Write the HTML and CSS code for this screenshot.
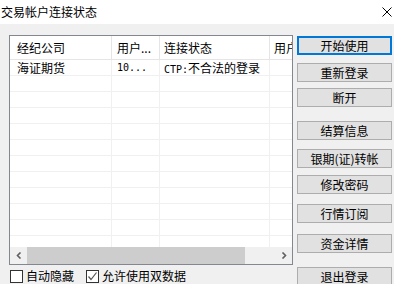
FILE: index.html
```html
<!DOCTYPE html>
<html lang="zh-CN">

<head>
    <meta charset="UTF-8">
    <title>交易帐户连接状态</title>
    <link rel="stylesheet" href="styles.css">
</head>

<body>
    <div class="dialog">
        <div class="titlebar">
            <span class="title">交易帐户连接状态</span>
            <svg class="close" width="10" height="10" viewBox="0 0 10 10">
                <path d="M0.5 0.5 L9.5 9.5 M9.5 0.5 L0.5 9.5" stroke="#000" stroke-width="1" fill="none"/>
            </svg>
        </div>

        <div class="content">
            <div class="left">
                <div class="listview">
                    <div class="list-header">
                        <div class="col c1">经纪公司</div>
                        <div class="col c2">用户...</div>
                        <div class="col c3">连接状态</div>
                        <div class="col c4">用户</div>
                    </div>
                    <div class="list-body">
                        <div class="row">
                            <div class="col c1">海证期货</div>
                            <div class="col c2 mono">10...</div>
                            <div class="col c3"><span class="mono">CTP:</span>不合法的登录</div>
                            <div class="col c4"></div>
                        </div>
                        <div class="row"><div class="col c1"></div><div class="col c2"></div><div class="col c3"></div><div class="col c4"></div></div>
                        <div class="row"><div class="col c1"></div><div class="col c2"></div><div class="col c3"></div><div class="col c4"></div></div>
                        <div class="row"><div class="col c1"></div><div class="col c2"></div><div class="col c3"></div><div class="col c4"></div></div>
                        <div class="row"><div class="col c1"></div><div class="col c2"></div><div class="col c3"></div><div class="col c4"></div></div>
                        <div class="row"><div class="col c1"></div><div class="col c2"></div><div class="col c3"></div><div class="col c4"></div></div>
                        <div class="row"><div class="col c1"></div><div class="col c2"></div><div class="col c3"></div><div class="col c4"></div></div>
                        <div class="row"><div class="col c1"></div><div class="col c2"></div><div class="col c3"></div><div class="col c4"></div></div>
                        <div class="row"><div class="col c1"></div><div class="col c2"></div><div class="col c3"></div><div class="col c4"></div></div>
                        <div class="row"><div class="col c1"></div><div class="col c2"></div><div class="col c3"></div><div class="col c4"></div></div>
                        <div class="row"><div class="col c1"></div><div class="col c2"></div><div class="col c3"></div><div class="col c4"></div></div>
                        <div class="row"><div class="col c1"></div><div class="col c2"></div><div class="col c3"></div><div class="col c4"></div></div>
                    </div>
                    <div class="hscroll">
                        <div class="arrow">
                            <svg width="6" height="7" viewBox="0 0 6 7"><path d="M4.5 0.5 L1.5 3.5 L4.5 6.5" stroke="#606060" stroke-width="1.6" fill="none"/></svg>
                        </div>
                        <div class="thumb"></div>
                        <div class="track"></div>
                        <div class="arrow">
                            <svg width="6" height="7" viewBox="0 0 6 7"><path d="M1.5 0.5 L4.5 3.5 L1.5 6.5" stroke="#606060" stroke-width="1.6" fill="none"/></svg>
                        </div>
                    </div>
                </div>

                <div class="options">
                    <label class="check">
                        <span class="box"></span>自动隐藏
                    </label>
                    <label class="check">
                        <span class="box">
                            <svg width="11" height="11" viewBox="0 0 11 11"><path d="M1.5 5.5 L4 8.5 L9.5 1.5" stroke="#555" stroke-width="1.2" fill="none"/></svg>
                        </span>允许使用双数据
                    </label>
                </div>
            </div>

            <div class="buttons">
                <button class="btn default">开始使用</button>
                <button class="btn b2">重新登录</button>
                <button class="btn b3">断开</button>
                <button class="btn b4">结算信息</button>
                <button class="btn b5">银期(证)转帐</button>
                <button class="btn b6">修改密码</button>
                <button class="btn b7">行情订阅</button>
                <button class="btn b8">资金详情</button>
                <button class="btn b9">退出登录</button>
            </div>
        </div>
    </div>
</body>

</html>
```

FILE: styles.css
```css
/* Dialog window */
body {
    margin: 0;
    padding: 0;
    background-color: #f0f0f0;
    font-family: "Noto Sans CJK SC", "Liberation Sans", sans-serif;
    font-size: 12px;
    color: #000;
    overflow: hidden;
}

.dialog {
    width: 394px;
    height: 284px;
    display: flex;
    flex-direction: column;
    overflow: hidden;
}

.titlebar {
    height: 24px;
    background-color: #fff;
    display: flex;
    align-items: center;
    justify-content: space-between;
    padding: 0 2px 0 1px;
    flex-shrink: 0;
}

.title {
    font-size: 12px;
    line-height: 12px;
}

.content {
    display: flex;
    padding-left: 9px;
    gap: 4px;
}

/* List view */
.listview {
    margin-top: 11px;
    width: 282px;
    height: 228px;
    border: 1px solid #828790;
    background-color: #fff;
    overflow: hidden;
    display: flex;
    flex-direction: column;
}

.list-header {
    display: flex;
    height: 23px;
    border-bottom: 1px solid #e5e5e5;
    flex-shrink: 0;
}

.list-header .col {
    line-height: 23px;
    border-right: 1px solid #e5e5e5;
}

.list-body {
    height: 187px;
    overflow: hidden;
    flex-shrink: 0;
}

.row {
    display: flex;
    height: 15px;
    border-bottom: 1px solid #f0f0f0;
}

.row .col {
    line-height: 15px;
    border-right: 1px solid #f0f0f0;
}

.col {
    flex-shrink: 0;
    white-space: nowrap;
    overflow: hidden;
    padding-left: 4px;
}

.c1 {
    width: 94px;
    padding-left: 7px;
}

.c2 {
    width: 42px;
    padding-left: 5px;
}

.c3 {
    width: 105px;
}

.c4 {
    width: 60px;
}

.mono {
    font-family: "DejaVu Sans Mono", monospace;
    font-size: 10px;
}

/* Horizontal scrollbar */
.hscroll {
    height: 17px;
    display: flex;
    background-color: #f0f0f0;
    flex-shrink: 0;
}

.hscroll .arrow {
    width: 17px;
    display: flex;
    align-items: center;
    justify-content: center;
}

.hscroll .thumb {
    width: 218px;
    background-color: #cdcdcd;
}

.hscroll .track {
    flex: 1;
}

/* Check boxes */
.options {
    display: flex;
    gap: 12px;
    margin-top: 3px;
    padding-left: 1px;
}

.check {
    display: flex;
    align-items: center;
    gap: 3px;
    line-height: 16px;
}

.box {
    width: 11px;
    height: 11px;
    border: 1px solid #333;
    background-color: #fff;
    display: flex;
}

/* Buttons */
.buttons {
    display: flex;
    flex-direction: column;
    padding-top: 12px;
}

.btn {
    width: 95px;
    height: 19px;
    padding: 0;
    border: 1px solid #adadad;
    background-color: #e1e1e1;
    font-family: "Noto Sans CJK SC", sans-serif;
    font-size: 12px;
    line-height: 15px;
    color: #000;
}

.btn.default {
    border: 2px solid #0078d7;
}

.b2 { margin-top: 8px; }
.b3 { margin-top: 6px; }
.b4 { margin-top: 14px; }
.b5 { margin-top: 9px; }
.b6 { margin-top: 7px; }
.b7 { margin-top: 10px; }
.b8 { margin-top: 11px; }
.b9 { margin-top: 14px; }
```
